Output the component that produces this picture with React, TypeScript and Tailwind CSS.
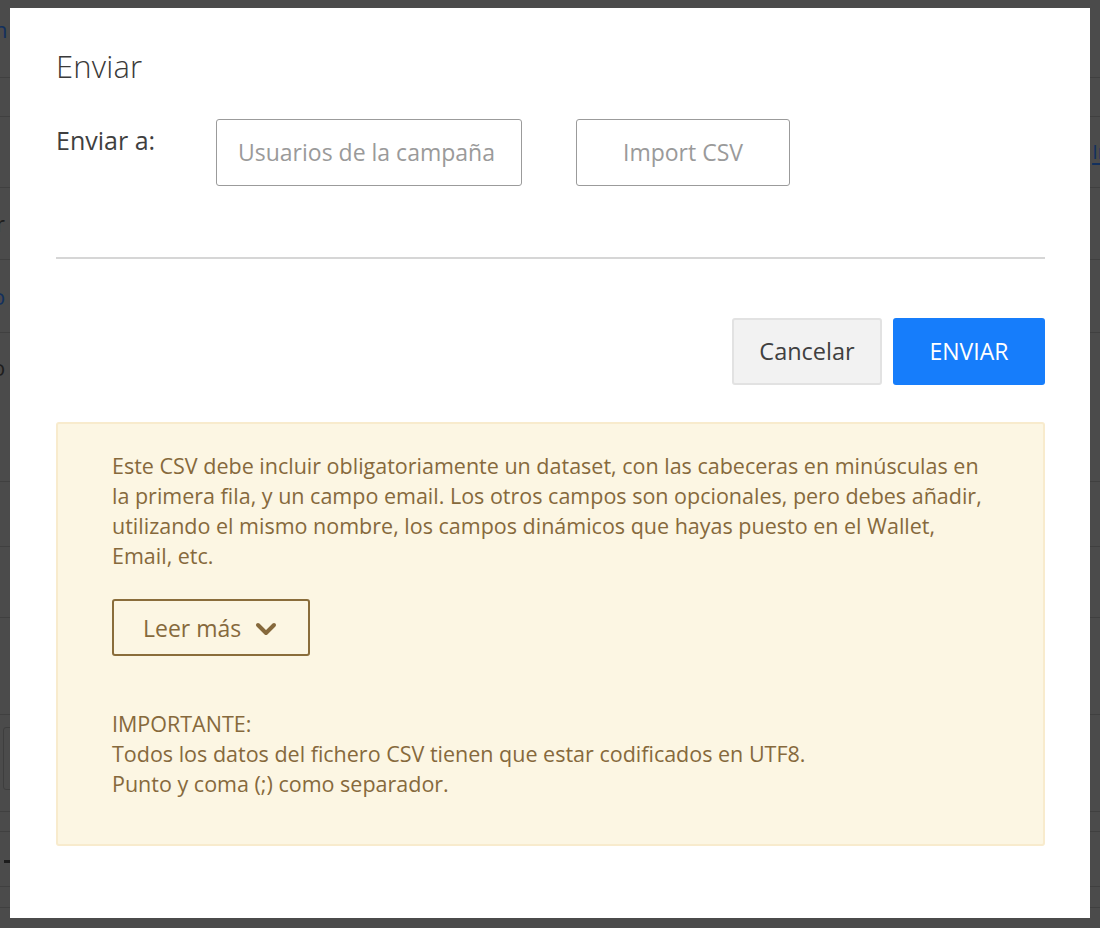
import React from "react";
import { ChevronDown } from "lucide-react";

const font = { fontFamily: '"Open Sans", "Noto Sans", Arial, sans-serif' };

function BgRow({ h, children }: { h: string; children?: React.ReactNode }) {
  return (
    <div className={`${h} border-b border-[#404040] flex items-center justify-between`}>
      {children}
    </div>
  );
}

export default function App() {
  return (
    <div className="relative w-[1100px] h-[928px] overflow-hidden bg-[#4b4b4b]" style={font}>
      {/* underlying page, dimmed */}
      <div className="flex flex-col text-[22px]">
        <BgRow h="h-[78px]">
          <span className="text-[#12305e] -ml-[6px] -mt-[18px]">n</span>
        </BgRow>
        <BgRow h="h-[39px]" />
        <BgRow h="h-[71px]">
          <span />
          <span className="text-[#12305e] text-[20px] mr-[-10px] underline underline-offset-4 decoration-2">In</span>
        </BgRow>
        <BgRow h="h-[72px]">
          <span className="text-[#1e1e1e] -ml-[4px]">r</span>
        </BgRow>
        <BgRow h="h-[73px]">
          <span className="text-[#12305e] -ml-[8px]">o</span>
        </BgRow>
        <BgRow h="h-[149px]">
          <span className="text-[#1e1e1e] -ml-[8px] -mt-[80px]">o</span>
        </BgRow>
        <BgRow h="h-[65px]" />
        <BgRow h="h-[71px]" />
        <BgRow h="h-[97px]" />
        <div className="h-[97px] border-b border-[#404040] relative">
          <div className="absolute left-[3px] top-[12px] w-[20px] h-[63px] border border-[#3e3e3e] rounded-[3px]" />
        </div>
        <BgRow h="h-[20px]" />
        <div className="h-[55px] border-b border-[#404040] relative">
          <div className="absolute left-[4px] top-[28px] w-[10px] h-[3px] bg-[#1c1c1c]" />
        </div>
        <BgRow h="h-[21px]" />
      </div>

      {/* modal */}
      <div className="absolute left-[10px] top-[8px] w-[1080px] h-[910px] bg-white pl-[46px] pr-[45px] pt-[42px]">
        <h2 className="text-[31px] font-light text-[#3a3a3a] leading-[32px] tracking-[0.2px]">Enviar</h2>

        <div className="flex items-center mt-[37px]">
          <div className="w-[160px] text-[25px] text-[#3f3f3f] -mt-[24px]">Enviar a:</div>
          <div className="w-[306px] h-[67px] border-[1.5px] border-[#9b9b9b] rounded-[3px] flex items-center pl-[21px] text-[23px] text-[#9a9a9a] whitespace-nowrap">
            Usuarios de la campaña
          </div>
          <div className="ml-[54px] w-[214px] h-[67px] border-[1.5px] border-[#9b9b9b] rounded-[3px] flex items-center justify-center text-[23px] text-[#9a9a9a]">
            Import CSV
          </div>
        </div>

        <div className="mt-[71px] h-[2px] bg-[#d6d6d6]" />

        <div className="flex justify-end gap-[11px] mt-[59px]">
          <button className="w-[150px] h-[67px] bg-[#f2f2f2] border-2 border-[#e2e2e2] rounded-[3px] text-[23.5px] text-[#404040]">
            Cancelar
          </button>
          <button className="w-[152px] h-[67px] bg-[#167dfb] rounded-[3px] text-[23px] text-white">
            ENVIAR
          </button>
        </div>

        <div className="mt-[37px] h-[424px] bg-[#fcf6e3] border-2 border-[#f8ebcd] rounded-[3px] pl-[54px] pr-[50px] pt-[27px] text-[21.5px] leading-[30px] text-[#86693c]">
          <p>
            Este CSV debe incluir obligatoriamente un dataset, con las cabeceras en minúsculas en la primera fila, y un campo email. Los otros campos son opcionales, pero debes añadir, utilizando el mismo nombre, los campos dinámicos que hayas puesto en el Wallet, Email, etc.
          </p>
          <button className="mt-[28px] w-[198px] h-[57px] border-2 border-[#8a6d3b] rounded-[3px] flex items-center pl-[29px] gap-[9px] text-[23px] text-[#86693c]">
            <span>Leer más</span>
            <ChevronDown size={32} strokeWidth={3} className="mt-[2px]" />
          </button>
          <div className="mt-[53px]">
            <p>IMPORTANTE:</p>
            <p>Todos los datos del fichero CSV tienen que estar codificados en UTF8.</p>
            <p>Punto y coma (;) como separador.</p>
          </div>
        </div>
      </div>
    </div>
  );
}
